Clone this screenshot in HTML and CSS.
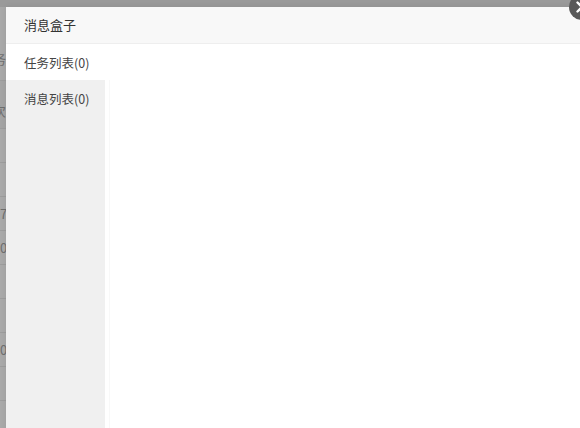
FILE: index.html
```
<!DOCTYPE html>
<html lang="zh-CN">
<head>
<meta charset="utf-8">
<title>消息盒子</title>
<link rel="stylesheet" href="styles.css">
</head>
<body>
<div class="page">
  <div class="page-top"></div>
  <div class="page-row tall"><span class="cut">任务</span></div>
  <div class="page-row head"><span class="cut">次</span></div>
  <div class="page-row"></div>
  <div class="page-row"></div>
  <div class="page-row"><span>7</span></div>
  <div class="page-row"><span>0</span></div>
  <div class="page-row"></div>
  <div class="page-row"></div>
  <div class="page-row"><span>0</span></div>
  <div class="page-row"></div>
  <div class="page-row"></div>
</div>

<div class="dialog">
  <div class="dialog-title">消息盒子</div>
  <div class="dialog-body">
    <ul class="tabs">
      <li class="tab active">任务列表(0)</li>
      <li class="tab">消息列表(0)</li>
    </ul>
    <div class="panel"></div>
  </div>
  <a class="close" title="关闭">
    <svg viewBox="0 0 26 26" width="26" height="26">
      <circle cx="13" cy="13" r="13" fill="#585858"/>
      <path d="M8.5 8.5 L17.5 17.5 M17.5 8.5 L8.5 17.5" stroke="#fff" stroke-width="2.4" stroke-linecap="round"/>
    </svg>
  </a>
</div>
</body>
</html>
```
FILE: styles.css
```
html, body {
  margin: 0;
  padding: 0;
  height: 100%;
  overflow: hidden;
}
body {
  font-family: "Noto Sans CJK SC", "Microsoft YaHei", sans-serif;
  background: #a9a9a9;
  position: relative;
}
.page {
  display: flex;
  flex-direction: column;
  color: #6e6e6e;
  font-size: 13px;
}
.page-top {
  height: 7px;
  background: #9a9a9a;
}
.page-row {
  height: 33px;
  border-bottom: 1px solid #9c9c9c;
  display: flex;
  align-items: center;
  white-space: nowrap;
}
.page-row.tall {
  height: 74px;
  align-items: flex-end;
  padding-bottom: 12px;
  box-sizing: border-box;
}
.page-row.head {
  height: 48px;
  background: #a4a4a4;
  align-items: flex-end;
  padding-bottom: 8px;
  box-sizing: border-box;
}
.cut {
  margin-left: -20px;
}
.page-row.head .cut {
  margin-left: -7px;
}
.dialog {
  position: absolute;
  left: 6px;
  top: 7px;
  width: 620px;
  height: 460px;
  background: #fff;
  box-shadow: 0 0 6px rgba(0, 0, 0, 0.08);
  display: flex;
  flex-direction: column;
}
.dialog-title {
  height: 36px;
  line-height: 36px;
  padding-left: 18px;
  background: #f8f8f8;
  border-bottom: 1px solid #eeeeee;
  color: #333;
  font-size: 13px;
}
.dialog-body {
  flex: 1;
  display: flex;
}
.tabs {
  list-style: none;
  margin: 0;
  padding: 0;
  width: 99px;
  background: #f0f0f0;
}
.tab {
  height: 37px;
  line-height: 37px;
  padding-left: 18px;
  font-size: 12.5px;
  color: #444;
}
.tab.active {
  height: 36px;
  line-height: 38px;
  background: #fff;
}
.panel {
  flex: 1;
  margin-left: 4px;
  margin-top: 36px;
  border-left: 1px solid #f8f8f8;
}
.close {
  position: absolute;
  left: 563px;
  top: -13px;
  width: 26px;
  height: 26px;
  display: block;
  cursor: pointer;
}
.close svg {
  display: block;
}
```
